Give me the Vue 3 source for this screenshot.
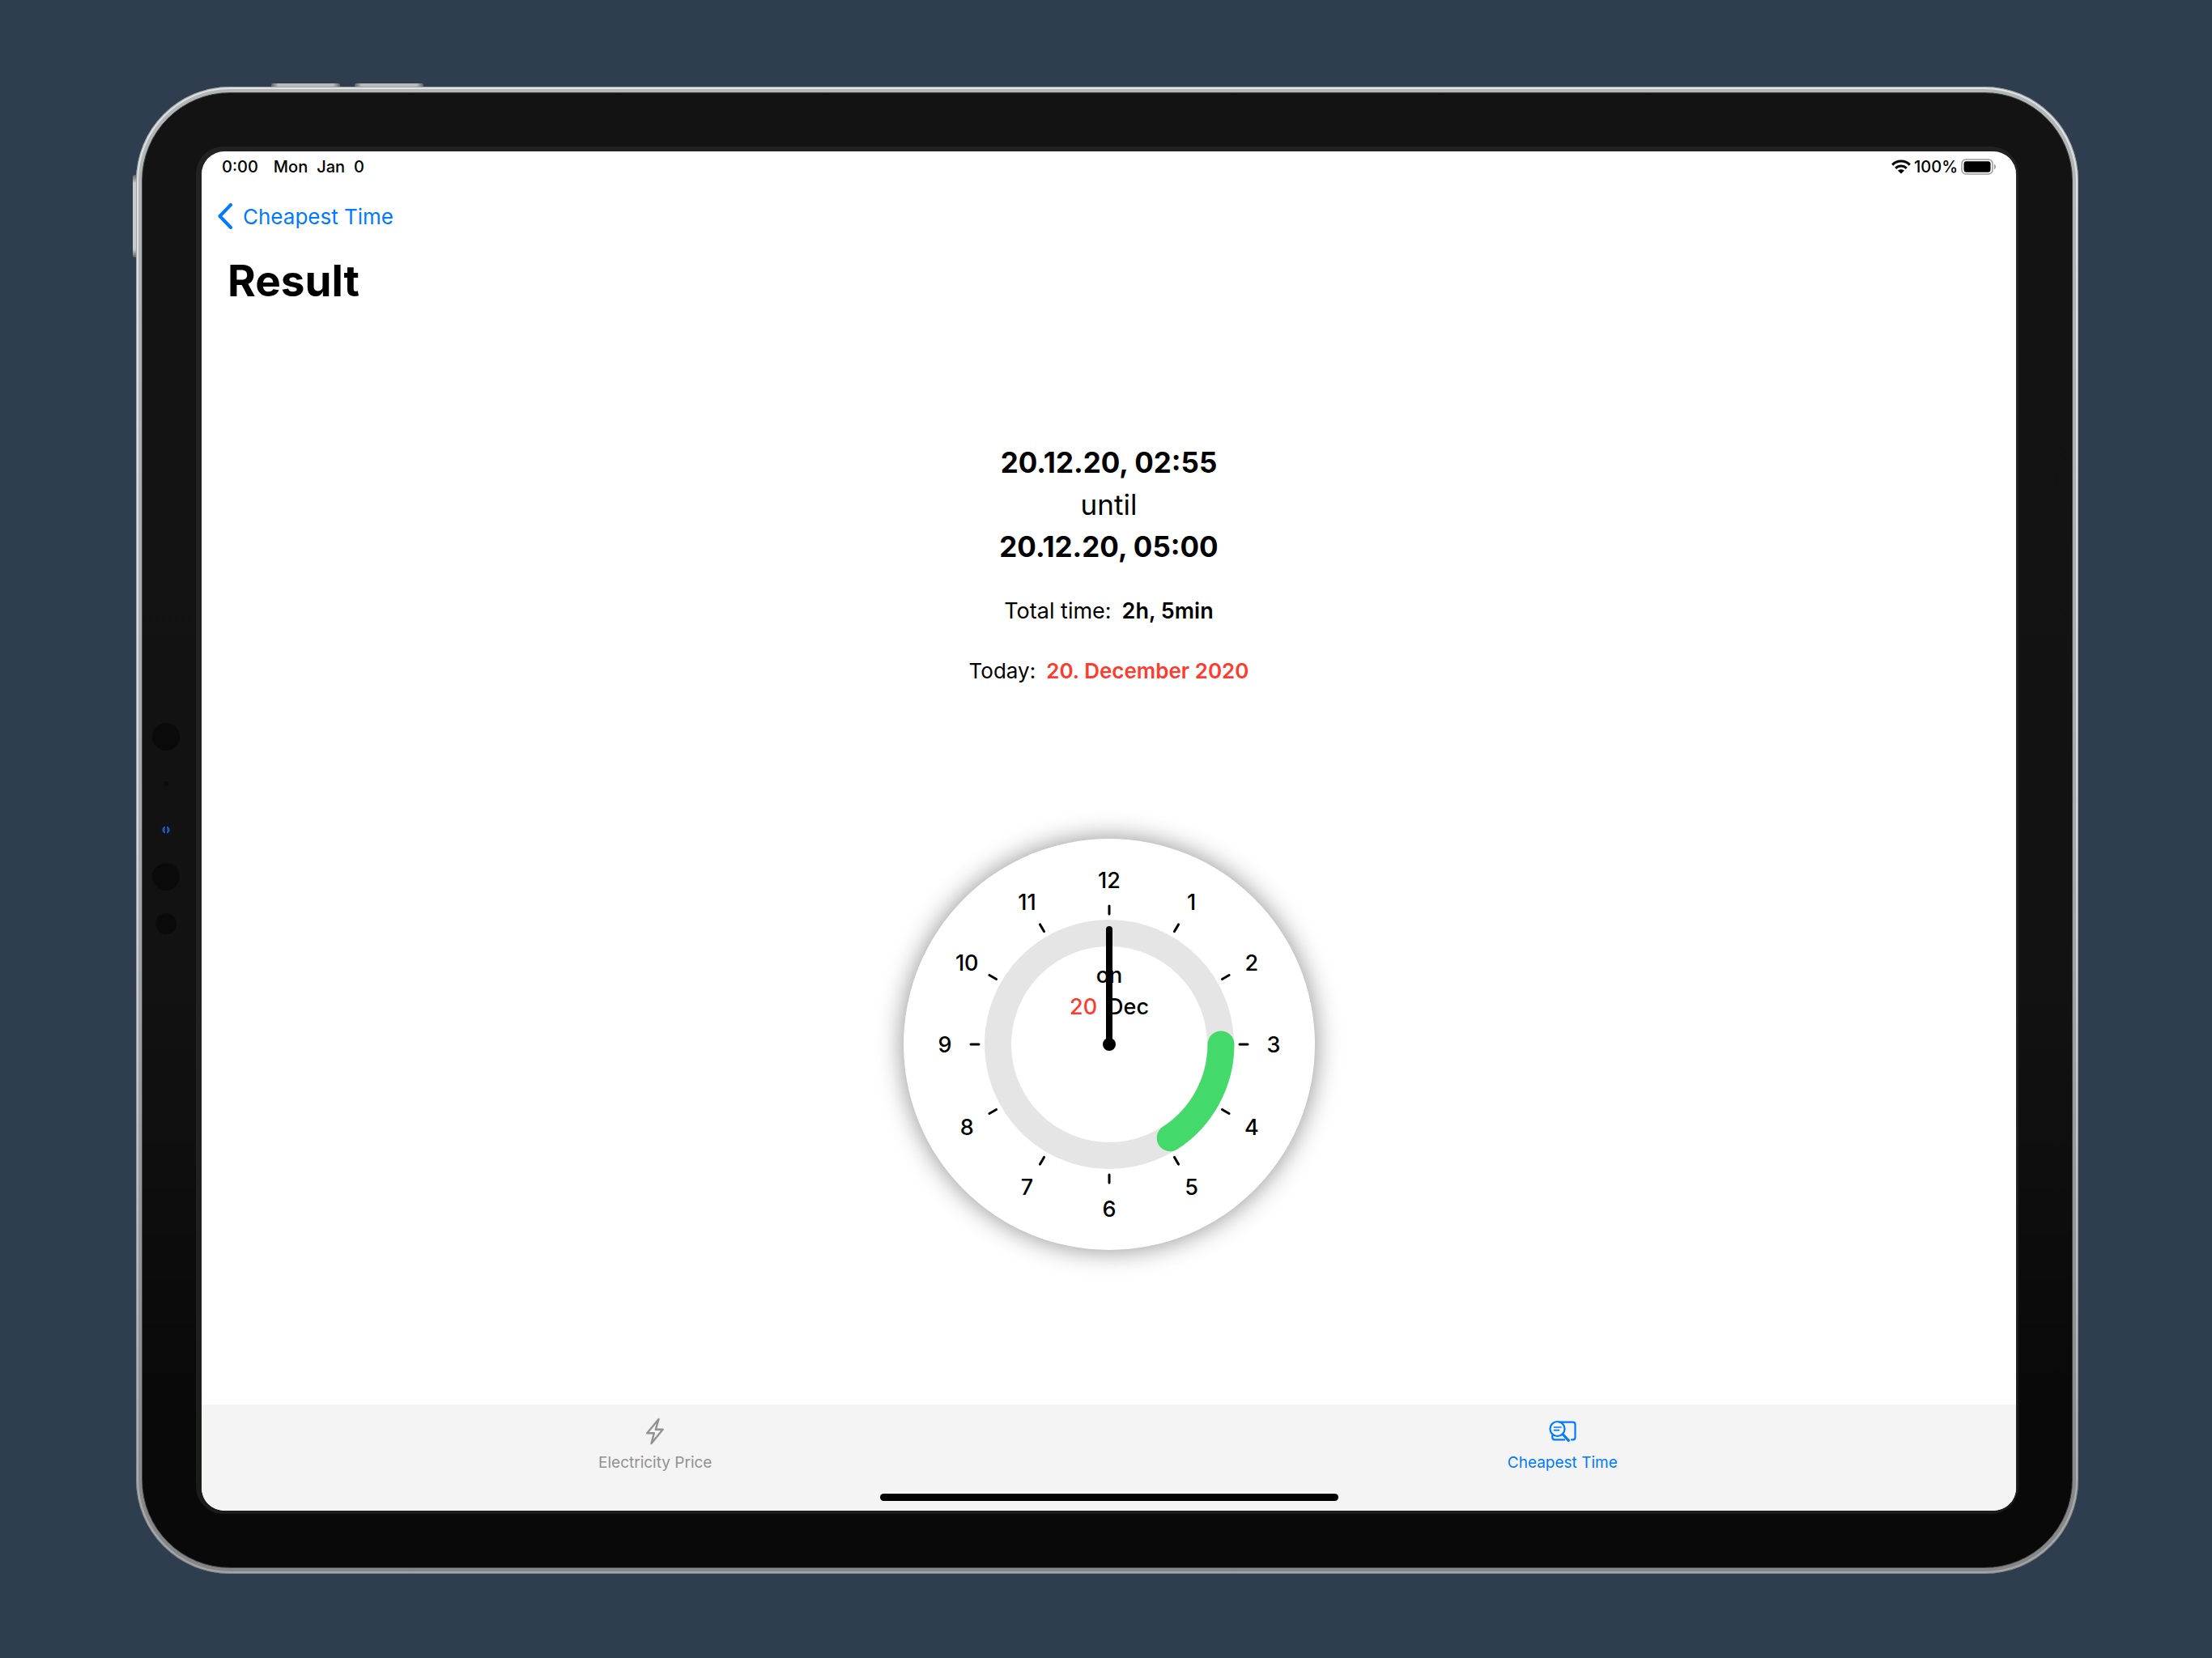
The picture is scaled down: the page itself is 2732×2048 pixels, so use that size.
<script setup>
const sensors = ['large', 'dot', 'camera', 'large', 'small']

const polar = (hour, radius) => {
  const a = (hour * Math.PI) / 6
  return {
    x: Math.round(Math.sin(a) * radius * 10) / 10,
    y: Math.round(-Math.cos(a) * radius * 10) / 10,
  }
}

const hours = Array.from({ length: 12 }, (_, i) => ({
  label: i + 1,
  ...polar(i + 1, 203),
  from: polar(i + 1, 161),
  to: polar(i + 1, 171),
}))

const start = polar(3, 138)
const end = polar(4.9, 138)
const arc = `M${start.x} ${start.y}A138 138 0 0 1 ${end.x} ${end.y}`
</script>

<template>
  <div class="page">
    <div class="device">
      <span class="key key-a"></span>
      <span class="key key-b"></span>
      <span class="key key-side"></span>
      <div class="rim">
        <div class="bezel">
          <div class="sensors">
            <span v-for="(s, i) in sensors" :key="i" :class="['sensor', s]"></span>
          </div>
          <div class="glass">
            <div class="screen">
              <header class="status">
                <div class="status-left">
                  <span class="time">0:00</span>
                  <span>Mon</span>
                  <span>Jan</span>
                  <span>0</span>
                </div>
                <div class="status-right">
                  <svg class="wifi" viewBox="0 0 24 18" aria-hidden="true">
                    <g fill="none" stroke="#000" stroke-width="3">
                      <path d="M1.2 6.6C7.2.4 16.8.4 22.8 6.6" />
                      <path d="M5.2 10.8C9.2 7 14.8 7 18.8 10.8" />
                    </g>
                    <path d="M12 17.6L8 13.8C10.2 11.8 13.8 11.8 16 13.8Z" />
                  </svg>
                  <span>100%</span>
                  <svg class="battery" viewBox="0 0 44 20" aria-hidden="true">
                    <rect x="1" y="1" width="38" height="18" rx="5" fill="none" stroke="#9b9b9d" stroke-width="1.5" />
                    <rect x="3.5" y="3.3" width="33" height="13.4" rx="3" />
                    <path d="M41 6.8C43.6 7.8 43.6 12.2 41 13.2Z" fill="#9b9b9d" />
                  </svg>
                </div>
              </header>

              <nav class="nav">
                <button class="back" type="button">
                  <svg viewBox="0 0 18 32" aria-hidden="true">
                    <path d="M16 2L2.5 16L16 30" fill="none" stroke="#007aff" stroke-width="4" stroke-linecap="round" stroke-linejoin="round" />
                  </svg>
                  Cheapest Time
                </button>
              </nav>

              <h1>Result</h1>

              <main>
                <section class="range">
                  <strong>20.12.20, 02:55</strong>
                  <span>until</span>
                  <strong>20.12.20, 05:00</strong>
                </section>
                <p class="fact"><span>Total time:</span><b>2h, 5min</b></p>
                <p class="fact today"><span>Today:</span><b>20. December 2020</b></p>

                <div class="clock">
                  <svg viewBox="-254 -254 508 508" role="img" aria-label="Clock">
                    <circle r="137.5" fill="none" stroke="#e5e5e5" stroke-width="33" />
                    <path :d="arc" fill="none" stroke="#43d96b" stroke-width="33" stroke-linecap="round" />
                    <g v-for="h in hours" :key="h.label">
                      <line class="tick" :x1="h.from.x" :y1="h.from.y" :x2="h.to.x" :y2="h.to.y" />
                      <text class="label" :x="h.x" :y="h.y + 10">{{ h.label }}</text>
                    </g>
                    <text class="label" x="0" y="-76">on</text>
                    <text class="label day" x="-49" y="-37">20</text>
                    <text class="label month" x="49" y="-37">Dec</text>
                    <line class="hand" x1="0" y1="0" x2="0" y2="-142" />
                    <circle r="8" />
                  </svg>
                </div>
              </main>

              <footer class="tabs">
                <button class="tab" type="button">
                  <svg viewBox="0 0 34 34" aria-hidden="true">
                    <path d="M21.5 2L7.2 19.2H15.8L12.5 32L26.6 14.8H17.8Z" fill="none" stroke="currentColor" stroke-width="2.4" stroke-linejoin="round" />
                  </svg>
                  Electricity Price
                </button>
                <button class="tab active" type="button">
                  <svg viewBox="0 0 34 34" aria-hidden="true">
                    <g fill="none" stroke="currentColor" stroke-width="2.2" stroke-linecap="round">
                      <circle cx="10.5" cy="14" r="9" />
                      <path d="M17.5 21L24.3 28.4" stroke-width="3.2" />
                      <path d="M6.5 12H15M6.5 15.6H12.5" stroke-width="1.7" />
                      <path d="M13 5.6H29.5Q32.5 5.6 32.5 8.6V24.5Q32.5 27.4 29.5 27.4H28" />
                      <path d="M4.3 22V24.5Q4.3 27.4 7.3 27.4H19" />
                    </g>
                  </svg>
                  Cheapest Time
                </button>
                <span class="home"></span>
              </footer>
            </div>
          </div>
        </div>
      </div>
    </div>
  </div>
</template>

<style>
body {
  margin: 0;
  background: #2e3e4f;
}
</style>

<style scoped>
* {
  box-sizing: border-box;
}

.page {
  display: flex;
  min-height: 100vh;
  padding: 107px 165px 104px 168px;
  font-family: Inter, "Liberation Sans", sans-serif;
  color: #000;
}

.device {
  position: relative;
  display: flex;
  flex: 1;
  padding: 3px;
  border-radius: 116px;
  background: linear-gradient(#e2e3e4, #d6d7d8 50%, #a5a7a8);
  box-shadow: inset 0 0 0 1px rgba(90, 96, 100, 0.5);
}

.rim {
  display: flex;
  flex: 1;
  padding: 4px;
  border-radius: 113px;
  background: linear-gradient(#b4b7b8, #a6a9aa 50%, #858588);
}

.bezel {
  position: relative;
  display: flex;
  flex: 1;
  padding: 66px;
  border: 1px solid #45484a;
  border-radius: 109px;
  background: linear-gradient(#131313, #121212 60%, #090909 88%);
}

.glass {
  display: flex;
  flex: 1;
  padding: 6px 3px 4px 7px;
  border-radius: 34px;
  background: linear-gradient(#222, #222 60%, #1a1c1a);
}

.screen {
  display: flex;
  flex: 1;
  flex-direction: column;
  overflow: hidden;
  border-radius: 28px;
  background: #fff;
}

.key {
  position: absolute;
  top: -4px;
  width: 85px;
  height: 4px;
  border-radius: 2px 2px 0 0;
  background: linear-gradient(90deg, #606264, #b8babb 10%, #b8babb 90%, #606264);
}

.key-a {
  left: 167px;
}

.key-b {
  left: 270px;
}

.key-side {
  top: 109px;
  left: -4px;
  width: 4px;
  height: 102px;
  border-radius: 2px 0 0 2px;
  background: linear-gradient(#606264, #c8cacb 10%, #c8cacb 90%, #606264);
}

.sensors {
  position: absolute;
  top: 778px;
  left: 12px;
  display: flex;
  flex-direction: column;
  align-items: center;
  width: 34px;
}

.sensor {
  flex: none;
  width: 34px;
  height: 34px;
  border-radius: 50%;
  background: #0a0a0a;
}

.sensor.dot {
  width: 6px;
  height: 6px;
  margin: 38px 0 45px;
  background: #0b0b0b;
}

.sensor.camera {
  width: 18px;
  height: 18px;
  margin-bottom: 32px;
  background:
    linear-gradient(#090c14, #090c14) center / 2px 10px no-repeat,
    radial-gradient(circle, #3b2a9a 0 2px, #1c62a8 3px 4px, #0b1526 5px, #101418 6px);
}

.sensor.small {
  width: 26px;
  height: 26px;
  margin-top: 28px;
}

.status {
  display: flex;
  align-items: center;
  justify-content: space-between;
  height: 38px;
  padding: 0 24px 0 25px;
  font-size: 20px;
  font-weight: 500;
}

.status-left {
  display: flex;
  gap: 11px;
}

.time {
  margin-right: 8px;
}

.status-right {
  display: flex;
  align-items: center;
  gap: 4px;
}

.wifi {
  width: 24px;
  height: 18px;
}

.battery {
  width: 44px;
  height: 20px;
}

.nav {
  display: flex;
  align-items: center;
  height: 84px;
  padding-left: 20px;
}

button {
  padding: 0;
  border: 0;
  background: none;
  font-family: inherit;
}

.back {
  display: flex;
  align-items: center;
  gap: 13px;
  color: #007aff;
  font-size: 26px;
}

.back svg {
  width: 18px;
  height: 32px;
}

h1 {
  margin: 0;
  padding-left: 32px;
  font-size: 53px;
  font-weight: 700;
  line-height: 76px;
}

main {
  display: flex;
  flex: 1;
  flex-direction: column;
  align-items: center;
  justify-content: center;
  padding-bottom: 32px;
}

.range {
  display: flex;
  flex-direction: column;
  align-items: center;
  font-size: 35px;
  line-height: 52px;
}

.fact {
  display: flex;
  gap: 13px;
  margin: 34px 0 0;
  font-size: 27px;
  line-height: 40px;
}

.fact b {
  font-weight: 600;
}

.today {
  font-size: 26px;
}

.today b {
  color: #ff3b30;
}

.clock {
  width: 508px;
  height: 508px;
  margin-top: 187px;
  border-radius: 50%;
  background: #fff;
  box-shadow: 0 0 32px rgba(0, 0, 8, 0.45);
}

.clock svg {
  display: block;
}

.tick {
  stroke: #000;
  stroke-width: 3px;
  stroke-linecap: round;
}

.hand {
  stroke: #000;
  stroke-width: 8px;
  stroke-linecap: round;
}

.label {
  font-size: 27px;
  font-weight: 500;
  text-anchor: middle;
}

.day {
  fill: #ff3b30;
  text-anchor: start;
}

.month {
  text-anchor: end;
}

.tabs {
  position: relative;
  display: flex;
  height: 131px;
  background: #f4f4f4;
}

.tab {
  display: flex;
  flex: 1;
  flex-direction: column;
  align-items: center;
  gap: 8px;
  padding-top: 16px;
  color: #929292;
  font-size: 19px;
  line-height: 28px;
}

.tab svg {
  width: 34px;
  height: 34px;
}

.tab.active {
  color: #007aff;
}

.home {
  position: absolute;
  bottom: 12px;
  left: 50%;
  width: 566px;
  height: 9px;
  margin-left: -283px;
  border-radius: 5px;
  background: #000;
}
</style>
